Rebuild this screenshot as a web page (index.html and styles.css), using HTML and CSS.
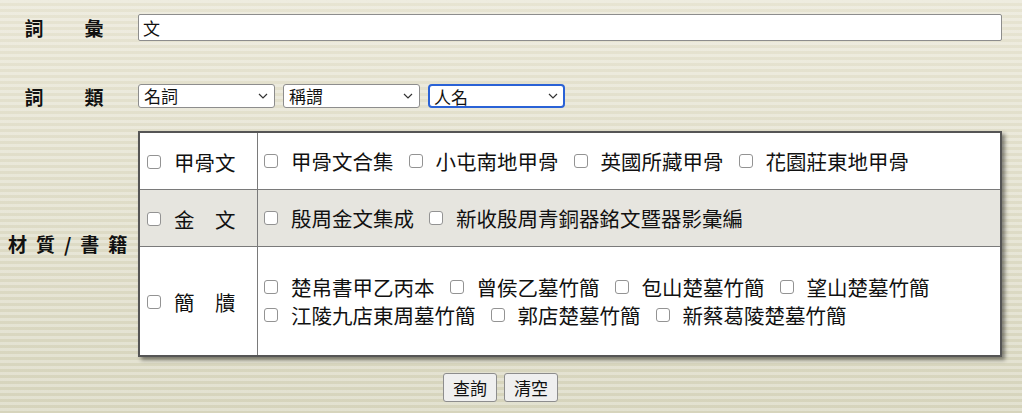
FILE: index.html
```html
<!DOCTYPE html>
<html lang="zh-Hant">
<head>
<meta charset="UTF-8" />
<meta name="viewport" content="width=device-width, initial-scale=1" />
<title>詞彙查詢</title>
<link rel="stylesheet" href="styles.css">
</head>
<body>

<form class="search" onsubmit="return false">
  <div class="row row-word">
    <div class="label label-short">詞　彙</div>
    <input type="text" class="word" value="文" />
  </div>

  <div class="row row-type">
    <div class="label label-short">詞　類</div>
    <div class="selects">
      <div class="select-wrap">
        <select><option>名詞</option></select>
        <svg class="chevron" viewBox="0 0 10 6"><path d="M1 1l4 4 4-4" /></svg>
      </div>
      <div class="select-wrap">
        <select><option>稱謂</option></select>
        <svg class="chevron" viewBox="0 0 10 6"><path d="M1 1l4 4 4-4" /></svg>
      </div>
      <div class="select-wrap">
        <select class="active"><option>人名</option></select>
        <svg class="chevron" viewBox="0 0 10 6"><path d="M1 1l4 4 4-4" /></svg>
      </div>
    </div>
  </div>

  <div class="row row-source">
    <div class="label label-source">材質/書籍</div>
    <table class="sources">
      <tr class="r-bone">
        <td class="kind"><label class="item"><input type="checkbox" />甲骨文</label></td>
        <td class="books">
          <div class="book-list">
            <label class="item"><input type="checkbox" />甲骨文合集</label>
            <label class="item"><input type="checkbox" />小屯南地甲骨</label>
            <label class="item"><input type="checkbox" />英國所藏甲骨</label>
            <label class="item"><input type="checkbox" />花園莊東地甲骨</label>
          </div>
        </td>
      </tr>
      <tr class="r-bronze">
        <td class="kind"><label class="item"><input type="checkbox" />金　文</label></td>
        <td class="books">
          <div class="book-list">
            <label class="item"><input type="checkbox" />殷周金文集成</label>
            <label class="item"><input type="checkbox" />新收殷周青銅器銘文暨器影彙編</label>
          </div>
        </td>
      </tr>
      <tr class="r-slip">
        <td class="kind"><label class="item"><input type="checkbox" />簡　牘</label></td>
        <td class="books">
          <div class="book-list">
            <label class="item"><input type="checkbox" />楚帛書甲乙丙本</label>
            <label class="item"><input type="checkbox" />曾侯乙墓竹簡</label>
            <label class="item"><input type="checkbox" />包山楚墓竹簡</label>
            <label class="item"><input type="checkbox" />望山楚墓竹簡</label>
            <label class="item"><input type="checkbox" />江陵九店東周墓竹簡</label>
            <label class="item"><input type="checkbox" />郭店楚墓竹簡</label>
            <label class="item"><input type="checkbox" />新蔡葛陵楚墓竹簡</label>
          </div>
        </td>
      </tr>
    </table>
  </div>

  <div class="actions">
    <button type="submit">查詢</button>
    <button type="reset">清空</button>
  </div>
</form>

</body>
</html>
```

FILE: styles.css
```css
html {
  min-height: 100%;
}

body {
  margin: 8px;
  font-family: "Noto Sans CJK TC", "Noto Sans", sans-serif;
  color: #111;
  background:
    repeating-linear-gradient(to bottom, rgba(255,255,255,0.3) 0 3px, rgba(255,255,255,0) 3px 6px),
    linear-gradient(to bottom, #e7e4d2, #d6d4bc);
  min-height: 397px;
}

.search {
  width: 994px;
}

.row {
  display: flex;
  align-items: center;
}

.label {
  width: 130px;
  flex: none;
  box-sizing: border-box;
  padding-right: 7px;
  text-align: center;
  font-size: 19px;
  font-weight: bold;
  line-height: 24px;
  white-space: nowrap;
}

.label-short {
  letter-spacing: 11px;
}

.label-source {
  letter-spacing: 9px;
  padding-right: 4px;
}

/* 詞彙 */
.row-word {
  padding-top: 6px;
}

.word {
  flex: 1;
  box-sizing: border-box;
  height: 27px;
  margin: 0;
  padding: 0 4px;
  border: 1px solid #8d8d8d;
  border-radius: 2px;
  background: white;
  font-family: inherit;
  font-size: 17px;
  color: #111;
}

/* 詞類 */
.row-type {
  margin-top: 43px;
}

.selects {
  display: flex;
  gap: 8px;
}

.select-wrap {
  position: relative;
}

.select-wrap select {
  appearance: none;
  box-sizing: border-box;
  width: 137px;
  height: 24px;
  margin: 0;
  padding: 0 0 0 5px;
  border: 1px solid #8d8d8d;
  border-radius: 3px;
  background: white;
  font-family: inherit;
  font-size: 17px;
  line-height: 22px;
  color: #111;
}

.select-wrap select.active {
  border: 2px solid #2a62d6;
  border-radius: 4px;
  padding-left: 4px;
}

.chevron {
  position: absolute;
  right: 7px;
  top: 9px;
  width: 10px;
  height: 6px;
  fill: none;
  stroke: #333;
  stroke-width: 1.2;
  pointer-events: none;
}

/* 材質/書籍 */
.row-source {
  margin-top: 22px;
}

.sources {
  flex: 1;
  border-collapse: collapse;
  border: 2px solid #555;
  background: white;
  box-shadow: 3px 3px 4px rgba(0,0,0,0.45);
  font-size: 20.5px;
}

.sources td {
  border: 1px solid #7a7a7a;
  padding: 0 6px;
  line-height: 28px;
}

.sources .kind {
  width: 105px;
}

.r-bone td { height: 56px; }
.r-bronze td { height: 56px; background: #e6e5df; }
.r-slip td { height: 108px; }

.book-list {
  display: flex;
  flex-wrap: wrap;
  column-gap: 15px;
}

.item {
  display: inline-flex;
  align-items: center;
  gap: 13px;
  white-space: nowrap;
}

.kind .item {
  margin-left: 1px;
}

.item input {
  appearance: none;
  width: 14px;
  height: 14px;
  margin: 0;
  border: 1px solid #939393;
  border-radius: 3px;
  background: white;
}

/* 按鈕 */
.actions {
  display: flex;
  justify-content: center;
  gap: 7px;
  margin-top: 16px;
  padding-right: 9px;
}

.actions button {
  box-sizing: border-box;
  height: 29px;
  padding: 0 9px;
  border: 1px solid #8d8d8d;
  border-radius: 3px;
  background: #efefef;
  font-family: inherit;
  font-size: 17px;
  color: #111;
}
```
